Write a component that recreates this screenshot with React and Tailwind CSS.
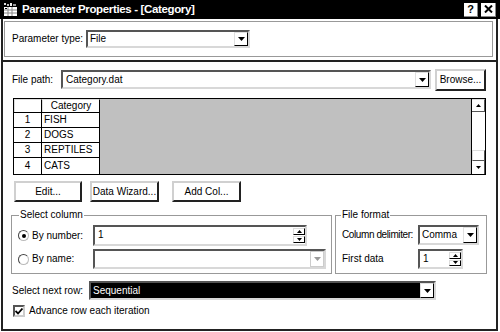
import React from "react";

const Tri = ({ up, gray }) => (
  <svg width="7" height="4" viewBox="0 0 7 4">
    <path d={up ? "M0 4 L3.5 0 L7 4Z" : "M0 0 L7 0 L3.5 4Z"} fill={gray ? "#9a9a9a" : "#000"} />
  </svg>
);

const SmallTri = ({ up }) => (
  <svg width="5" height="3" viewBox="0 0 5 3">
    <path d={up ? "M0 3 L2.5 0 L5 3Z" : "M0 0 L5 0 L2.5 3Z"} fill="#000" />
  </svg>
);

const DropBtn = ({ gray }) => (
  <div className="w-[14px] h-full flex items-center justify-center bg-white border border-t-[#e0e0e0] border-l-[#e0e0e0] border-b-black border-r-black">
    <Tri gray={gray} />
  </div>
);

const Spin = () => (
  <div className="w-[12px] h-full flex flex-col gap-[1px] py-[1px]">
    <div className="flex-1 flex items-center justify-center border border-t-[#ddd] border-l-[#ddd] border-b-black border-r-black bg-white">
      <SmallTri up />
    </div>
    <div className="flex-1 flex items-center justify-center border border-t-[#ddd] border-l-[#ddd] border-b-black border-r-black bg-white">
      <SmallTri />
    </div>
  </div>
);

const Field = ({ className, children }) => (
  <div className={"flex items-stretch border-2 border-t-[#555] border-l-[#555] border-b-[#d8d8d8] border-r-[#d8d8d8] bg-white " + className}>
    {children}
  </div>
);

const Btn = ({ className, children }) => (
  <div className={"flex items-center justify-center bg-white border-2 border-t-[#d0d0d0] border-l-[#d0d0d0] border-b-[#222] border-r-[#222] " + className}>
    {children}
  </div>
);

const Radio = ({ on }) => (
  <div className="w-[11px] h-[11px] rounded-full border border-t-[#444] border-l-[#444] border-b-[#bbb] border-r-[#bbb] bg-white flex items-center justify-center">
    {on ? <div className="w-[4px] h-[4px] rounded-full bg-black" /> : null}
  </div>
);

const AppIcon = () => (
  <svg width="15" height="15" viewBox="0 0 15 15">
    <rect x="0" y="0" width="15" height="15" fill="#000" />
    <rect x="1" y="5" width="13" height="9" fill="#fff" />
    <path d="M1 8 H14 M1 11 H14 M5 5 V14 M9 5 V14" stroke="#888" strokeWidth="1" />
    <rect x="1" y="1" width="2" height="2" fill="#ddd" />
    <rect x="4" y="2" width="2" height="2" fill="#bbb" />
    <rect x="7" y="1" width="2" height="3" fill="#eee" />
    <rect x="10" y="2" width="3" height="2" fill="#999" />
    <rect x="2" y="6" width="2" height="1" fill="#000" />
  </svg>
);

const Row = ({ n, name, last }) => (
  <div className={"flex " + (last ? "flex-1" : "h-[15px] border-b border-black")}>
    <div className="w-[28px] border-r border-black flex items-center justify-center">{n}</div>
    <div className="w-[58px] border-r border-black flex items-center pl-[2px]">{name}</div>
  </div>
);

export default function App() {
  return (
    <div className="w-[500px] h-[332px] bg-white overflow-hidden font-['Liberation_Sans',Arial,sans-serif] text-[10px] leading-none text-black">
      {/* Title bar */}
      <div className="h-[19px] bg-black flex items-center pl-[3px] pr-[4px]">
        <AppIcon />
        <div className="ml-[4px] flex-1 text-white font-bold text-[11.5px] tracking-[-0.35px]">
          Parameter Properties - [Category]
        </div>
        <div className="w-[14px] h-[14px] bg-white flex items-center justify-center font-bold text-[11px] border-r border-b border-[#888]">?</div>
        <div className="ml-[3px] w-[15px] h-[14px] bg-white flex items-center justify-center border-r border-b border-[#888]">
          <svg width="9" height="8" viewBox="0 0 9 8">
            <path d="M1 0.5 L8 7.5 M8 0.5 L1 7.5" stroke="#000" strokeWidth="2" />
          </svg>
        </div>
      </div>

      {/* Window body */}
      <div className="ml-[1px] w-[497px] h-[312px] border-l-2 border-r-2 border-b-2 border-[#222] flex flex-col">
        {/* Parameter type group */}
        <div className="mt-[2px] ml-[1px] w-[489px] h-[36px] border border-[#999] flex items-center pl-[7px]">
          <div className="w-[74px]">Parameter type:</div>
          <Field className="w-[164px] h-[18px]">
            <div className="flex-1 flex items-center pl-[2px]">File</div>
            <DropBtn />
          </Field>
        </div>

        {/* Separator */}
        <div className="mt-[3px] h-[2px] bg-[#222]" />

        {/* File path row */}
        <div className="mt-[8px] flex items-start pl-[9px]">
          <div className="w-[49px] h-[19px] flex items-center">File path:</div>
          <Field className="w-[370px] h-[19px]">
            <div className="flex-1 flex items-center pl-[3px]">Category.dat</div>
            <DropBtn />
          </Field>
          <Btn className="ml-[4px] w-[51px] h-[22px] -mt-[1px]">Browse...</Btn>
        </div>

        {/* Table */}
        <div className="mt-[7px] ml-[10px] w-[473px] h-[77px] border border-black flex">
          <div className="flex flex-col">
            <div className="flex h-[14px] border-b border-black">
              <div className="w-[28px] border-r border-black bg-white border-t border-l border-t-[#ddd] border-l-[#ddd]" />
              <div className="w-[58px] border-r border-black flex items-center justify-center border-t border-l border-t-[#ddd] border-l-[#ddd]">Category</div>
            </div>
            <Row n="1" name="FISH" />
            <Row n="2" name="DOGS" />
            <Row n="3" name="REPTILES" />
            <Row n="4" name="CATS" last />
          </div>
          <div className="flex-1 bg-[#c0c0c0]" />
          <div className="w-[14px] border-l border-black flex flex-col bg-white">
            <div className="h-[13px] flex items-center justify-center border-b border-r border-[#555] border-t border-t-[#ddd]">
              <SmallTri up />
            </div>
            <div className="flex-1" />
            <div className="h-[11px] border border-t-[#ddd] border-l-[#ddd] border-b-[#555] border-r-[#555]" />
            <div className="h-[13px] flex items-center justify-center border-r border-[#555]">
              <SmallTri />
            </div>
          </div>
        </div>

        {/* Buttons */}
        <div className="mt-[6px] pl-[11px] flex">
          <Btn className="w-[68px] h-[21px]">Edit...</Btn>
          <Btn className="ml-[8px] w-[69px] h-[21px]">Data Wizard...</Btn>
          <Btn className="ml-[13px] w-[69px] h-[21px]">Add Col...</Btn>
        </div>

        {/* Group boxes */}
        <div className="mt-[8px] pl-[8px] flex gap-[3px]">
          <fieldset className="w-[321px] h-[64px] border border-[#999]">
            <legend className="ml-[7px] px-[1px] leading-[10px]">Select column</legend>
            <div className="mt-[5px] flex items-center h-[21px] pl-[6px]">
              <Radio on />
              <div className="ml-[3px] w-[61px]">By number:</div>
              <Field className="w-[214px] h-[21px]">
                <div className="flex-1 pl-[3px] pt-[3px]">1</div>
                <Spin />
              </Field>
            </div>
            <div className="mt-[3px] flex items-center h-[20px] pl-[6px]">
              <Radio />
              <div className="ml-[3px] w-[61px]">By name:</div>
              <Field className="w-[233px] h-[20px]">
                <div className="flex-1" />
                <div className="w-[14px] h-full flex items-center justify-center bg-white border border-[#ccc]">
                  <Tri gray />
                </div>
              </Field>
            </div>
          </fieldset>
          <fieldset className="w-[152px] h-[64px] border border-[#999]">
            <legend className="ml-[5px] px-[1px] leading-[10px]">File format</legend>
            <div className="mt-[5px] flex items-center h-[20px] pl-[6px]">
              <div className="w-[76px] whitespace-nowrap tracking-[-0.4px]">Column delimiter:</div>
              <Field className="w-[61px] h-[20px]">
                <div className="flex-1 flex items-center pl-[2px]">Comma</div>
                <DropBtn />
              </Field>
            </div>
            <div className="mt-[4px] flex items-center h-[20px] pl-[6px]">
              <div className="w-[76px]">First data</div>
              <Field className="w-[45px] h-[20px]">
                <div className="flex-1 pl-[3px] pt-[3px]">1</div>
                <Spin />
              </Field>
            </div>
          </fieldset>
        </div>

        {/* Select next row */}
        <div className="mt-[7px] pl-[9px] flex items-center">
          <div className="w-[77px]">Select next row:</div>
          <Field className="w-[347px] h-[19px]">
            <div className="flex-1 flex items-center pl-[2px] bg-black text-white">Sequential</div>
            <DropBtn />
          </Field>
        </div>

        {/* Checkbox */}
        <div className="mt-[5px] pl-[10px] flex items-center">
          <div className="w-[12px] h-[12px] border-2 border-t-[#555] border-l-[#555] border-b-[#ccc] border-r-[#ccc] bg-white flex items-center justify-center">
            <svg width="8" height="7" viewBox="0 0 8 7">
              <path d="M0.5 3 L3 5.5 L7.5 0.5" stroke="#000" strokeWidth="1.8" fill="none" />
            </svg>
          </div>
          <div className="ml-[4px]">Advance row each iteration</div>
        </div>
      </div>
    </div>
  );
}
